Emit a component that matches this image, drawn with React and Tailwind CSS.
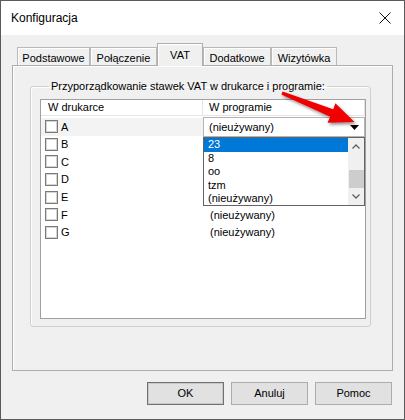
import React from "react";

const rows = ["A", "B", "C", "D", "E", "F", "G"];
const options = ["23", "8", "oo", "tzm", "(nieużywany)"];

const tabs = [
  { label: "Podstawowe", w: "w-[73px]" },
  { label: "Połączenie", w: "w-[67px]" },
  { label: "VAT", w: "w-[46px]", active: true },
  { label: "Dodatkowe", w: "w-[68px]" },
  { label: "Wizytówka", w: "w-[66px]" },
];

const Checkbox = () => (
  <span className="block w-[13px] h-[13px] border border-[#7a7a7a] bg-white shadow-[inset_0_0_0_1px_#d4d4d4]" />
);

const WinButton = ({ children, primary }) => (
  <button
    className={
      "w-[77px] h-[23px] bg-[#e1e1e1] text-[11px] text-black border " +
      (primary ? "border-[#707070] shadow-[inset_0_0_0_1px_#c8c8c8]" : "border-[#adadad]")
    }
  >
    {children}
  </button>
);

const RedArrow = () => (
  <svg
    className="absolute left-0 top-0 pointer-events-none"
    width="405"
    height="420"
    viewBox="0 0 405 420"
  >
    <defs>
      <filter id="sh" x="-20%" y="-20%" width="140%" height="140%">
        <feDropShadow dx="1.5" dy="2" stdDeviation="1.5" floodColor="#000" floodOpacity="0.45" />
      </filter>
    </defs>
    <polygon
      points="281.6,90.6 332.2,108.3 334.4,102.2 353.5,121 326.5,121.8 329.2,115.7 280.4,93.4"
      fill="#f00000"
      filter="url(#sh)"
    />
  </svg>
);

export default function App() {
  return (
    <div className="relative w-[405px] h-[420px] bg-[#f0f0f0] border border-[#5a5a5a] flex flex-col overflow-hidden font-['Liberation_Sans',Arial,sans-serif] text-black">
      {/* title bar */}
      <div className="h-[34px] bg-white flex items-center justify-between pl-[10px] pr-[12px]">
        <span className="text-[12px]">Konfiguracja</span>
        <svg width="12" height="12" viewBox="0 0 12 12" className="mr-[1px]">
          <path d="M0.5 0.5 L11.5 11.5 M11.5 0.5 L0.5 11.5" stroke="#111" strokeWidth="1" />
        </svg>
      </div>

      <div className="flex-1 flex flex-col px-[11px] pt-[8px]">
        {/* tabs */}
        <div className="flex items-end h-[22px] pl-[5px] relative z-10">
          {tabs.map((t) => (
            <div
              key={t.label}
              className={
                t.active
                  ? `${t.w} h-[23px] -mb-[1px] bg-[#f0f0f0] border border-b-0 border-[#adadad] shadow-[inset_1px_1px_0_#ffffff] flex items-start justify-center pt-[3px] text-[11px]`
                  : `${t.w} h-[18px] bg-[#f0f0f0] border border-b-0 border-[#b9b9b9] shadow-[inset_1px_1px_0_#ffffff] flex items-start justify-center pt-[2px] text-[11px]`
              }
            >
              {t.label}
            </div>
          ))}
        </div>

        {/* panel */}
        <div className="h-[306px] border border-[#adadad] shadow-[inset_1px_1px_0_#ffffff] pl-[17px] pr-[21px] pt-[14px]">
          <fieldset className="h-[247px] border border-[#cfcfcf] rounded-[3px] pl-[9px] pr-[4px] shadow-[inset_1px_1px_0_#ffffff]">
            <legend className="ml-[9px] px-[2px] text-[11px] leading-[13px]">
              Przyporządkowanie stawek VAT w drukarce i programie:
            </legend>
            <div className="relative mt-[6px] h-[220px] border border-[#a0a0a0] bg-white">
              {/* header */}
              <div className="flex h-[16px] border-b border-[#e5e5e5] text-[11px] leading-[15px]">
                <div className="w-[162px] pl-[7px] border-r border-[#e5e5e5]">W drukarce</div>
                <div className="flex-1 pl-[6px] border-r border-[#e5e5e5]">W programie</div>
              </div>
              {/* rows */}
              <div className="pt-[2px]">
                {rows.map((r, i) => (
                  <div key={r} className="flex h-[17.6px] items-center text-[11px]">
                    <div
                      className={
                        "w-[163px] h-full flex items-center pl-[4px] gap-[3px] " +
                        (i === 0 ? "bg-[#f3f3f3]" : "")
                      }
                    >
                      <Checkbox />
                      <span>{r}</span>
                    </div>
                    <div className="flex-1 pl-[6px]">{i >= 5 ? "(nieużywany)" : ""}</div>
                  </div>
                ))}
              </div>

              {/* combobox + open dropdown */}
              <div className="absolute left-[162px] top-[17px] w-[162px]">
                <div className="h-[20px] bg-white border border-[#b4b4b4] flex items-center justify-between pl-[5px] pr-[5px] text-[11px]">
                  <span>(nieużywany)</span>
                  <svg width="9" height="5" viewBox="0 0 9 5">
                    <polygon points="0,0 9,0 4.5,5" fill="#000" />
                  </svg>
                </div>
                <div className="h-[69px] bg-white border border-[#646464] flex">
                  <div className="flex-1 text-[11px]">
                    {options.map((o, i) => (
                      <div
                        key={o}
                        className={
                          "h-[13.5px] leading-[13.5px] pl-[4px] " +
                          (i === 0 ? "bg-[#0078d7] text-white" : "")
                        }
                      >
                        {o}
                      </div>
                    ))}
                  </div>
                  <div className="w-[16px] bg-[#f0f0f0] flex flex-col items-center">
                    <div className="h-[17px] flex items-center justify-center">
                      <svg width="8" height="5" viewBox="0 0 8 5">
                        <path d="M0.5 4.5 L4 1 L7.5 4.5" fill="none" stroke="#606060" strokeWidth="1.3" />
                      </svg>
                    </div>
                    <div className="h-[15px]" />
                    <div className="w-[15px] h-[18px] bg-[#cdcdcd]" />
                    <div className="flex-1 flex items-center justify-center">
                      <svg width="8" height="5" viewBox="0 0 8 5">
                        <path d="M0.5 0.5 L4 4 L7.5 0.5" fill="none" stroke="#606060" strokeWidth="1.3" />
                      </svg>
                    </div>
                  </div>
                </div>
              </div>
            </div>
          </fieldset>
        </div>

        {/* buttons */}
        <div className="flex justify-end gap-[7px] mt-[11px] pr-[1px]">
          <WinButton primary>OK</WinButton>
          <WinButton>Anuluj</WinButton>
          <WinButton>Pomoc</WinButton>
        </div>
      </div>

      <RedArrow />
    </div>
  );
}
